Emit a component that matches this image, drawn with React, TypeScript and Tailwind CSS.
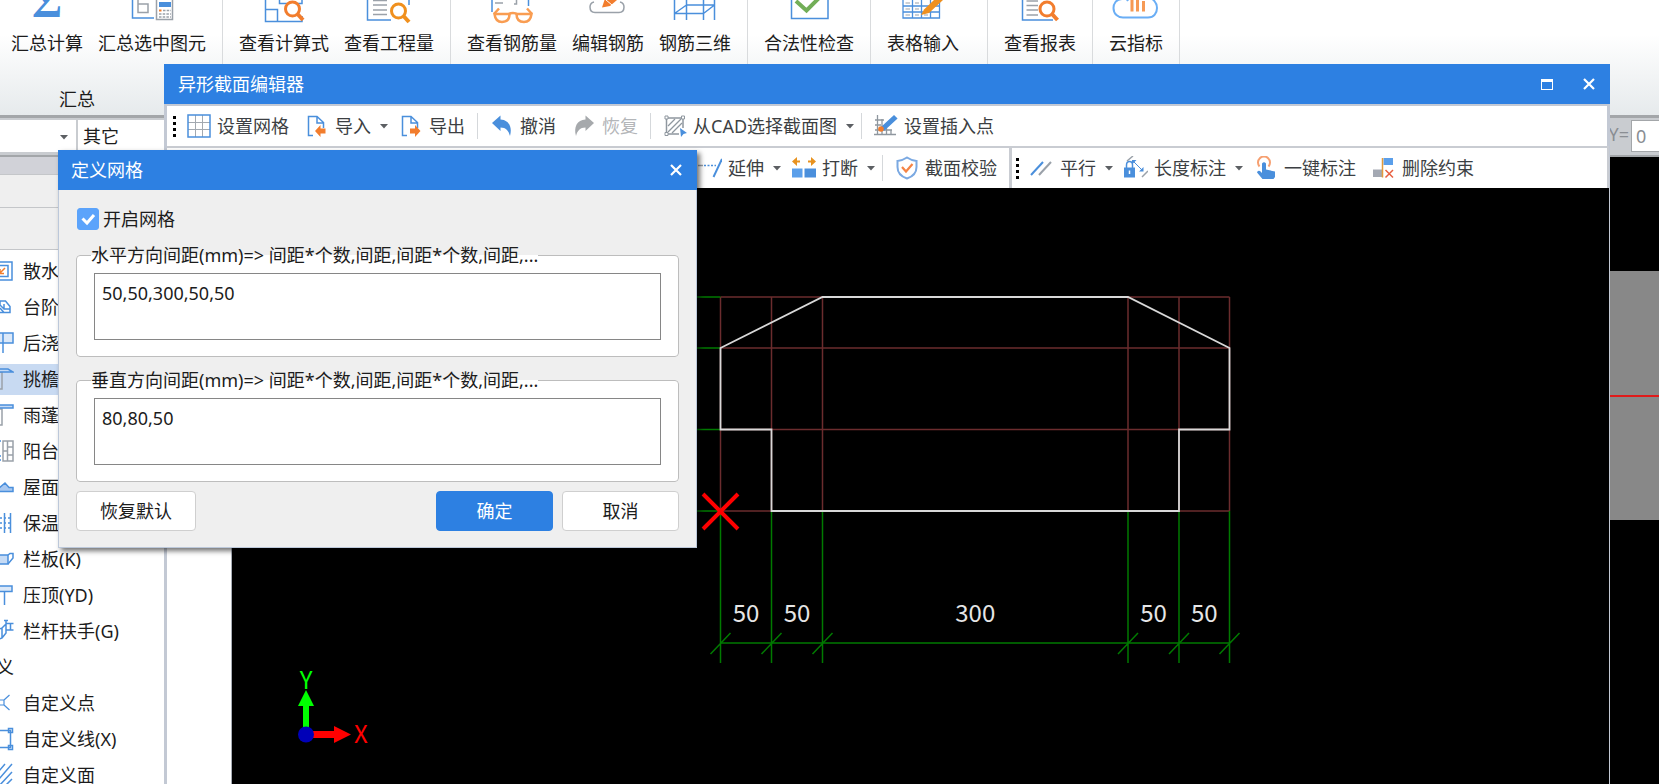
import type { ReactNode } from 'react';

const BLUE = '#4a8fdc';
const ORANGE = '#f27d2d';
const GREY = '#9aa1a9';

function RibbonIcon({ children }: { children: ReactNode }) {
  return (
    <svg className="h-6 w-12 shrink-0" viewBox="0 0 48 24" fill="none" aria-hidden="true">
      {children}
    </svg>
  );
}

const magnifier = (cx: number, cy: number, color: string) => (
  <>
    <circle cx={cx} cy={cy} r="7" stroke={color} strokeWidth="3" fill="#fff" />
    <path d={`M${cx + 5} ${cy + 5}l5.5 6`} stroke={color} strokeWidth="4" />
  </>
);

const ribbonIcons: Record<string, ReactNode> = {
  sum: (
    <text x="24" y="17" textAnchor="middle" fontSize="46" fontWeight="700" fill={BLUE} className="font-['Liberation_Serif',serif]">Σ</text>
  ),
  selected: (
    <>
      <path d="M4.500 0V18H26" stroke={BLUE} strokeWidth="1.500" />
      <path d="M10 0V4H20V12.500H10V4" stroke={GREY} strokeWidth="1.500" />
      <path d="M28.500 -2H44.500V19.500H28.500Z" stroke={GREY} strokeWidth="1.500" fill="#fff" />
      <rect x="31" y="2" width="12" height="5" fill={BLUE} />
      <path d="M31 10.500H33.500" stroke={ORANGE} strokeWidth="2" />
      <path d="M35 10.500H43M31 14H43M31 17H43" stroke={GREY} strokeWidth="1.500" strokeDasharray="2.500 1.200" />
    </>
  ),
  formula: (
    <>
      <path d="M5.500 0V21.500H42V16M5.500 9.500H17.500V21.500M19.500 0V3.500H42V0" stroke={BLUE} strokeWidth="1.500" />
      {magnifier(32.5, 9, ORANGE)}
    </>
  ),
  quantity: (
    <>
      <path d="M2.500 0V20H26M44 0V5" stroke={BLUE} strokeWidth="1.500" />
      <path d="M8 0.500H22M8 5H22M8 10H22M8 14.500H22" stroke={GREY} strokeWidth="1.500" />
      {magnifier(33.5, 11, '#f0901e')}
    </>
  ),
  rebar: (
    <>
      <path d="M4 0V12M40.500 0V6" stroke={BLUE} strokeWidth="1.500" />
      <path d="M7 3H15M28.500 0V4H26" stroke={GREY} strokeWidth="1.500" />
      <path d="M11 8.500L6 14M39 8.500L44 14M20 14.500Q25 11.500 30 14.500" stroke="#f99d52" strokeWidth="2.500" />
      <path d="M6.500 14H21.500Q21.500 22 14 22Q7.500 22 6.500 14ZM28.500 14H43.500Q42.500 22 36 22Q28.500 22 28.500 14Z" stroke="#f99d52" strokeWidth="2.500" />
    </>
  ),
  editRebar: (
    <>
      <path d="M10 2Q6 3 6 7Q6 12.500 11 12.500H35Q40 12.500 40 7Q40 3 36 2" stroke={GREY} strokeWidth="1.500" />
      <path d="M18 7.500L20.500 0H33L26 6Z" fill={ORANGE} />
      <path d="M22 0L28 5" stroke="#fff" />
    </>
  ),
  rebar3d: (
    <path d="M3.500 0V20M15.500 0V20M32.500 0V20M43.500 0V20M3.500 13.500H32.500M15.500 5H43.500M3.500 13.500L15.500 5M32.500 13.500L43.500 5" stroke={BLUE} strokeWidth="1.500" />
  ),
  validity: (
    <>
      <path d="M6.500 -2V18.500H43V-2" stroke={BLUE} strokeWidth="1.500" />
      <path d="M11 1L21.500 10.500L35 -3" stroke="#72ae57" strokeWidth="4" />
    </>
  ),
  table: (
    <>
      <path d="M4 0V18H40.500V0M4 6H40.500M4 12H40.500M13.500 0V18M22.500 0V18M31.500 0V18" stroke={BLUE} strokeWidth="1.300" />
      <path d="M6.500 3H11M6.500 9H11M6.500 15H11M16 3H20M16 9H20M16 15H20M25 15H29" stroke={GREY} />
      <path d="M22 15L25 9.500L35 0H44L30 13Z" fill="#ee9020" />
    </>
  ),
  report: (
    <>
      <path d="M6.500 0V20H37" stroke={BLUE} strokeWidth="1.500" />
      <path d="M10.500 1H22M10.500 5.500H22M10.500 10H22M10.500 15H22" stroke={GREY} strokeWidth="1.500" />
      {magnifier(31, 9, ORANGE)}
    </>
  ),
  cloud: (
    <>
      <path d="M16 1Q14 -3 10 -1.500M10 -1C4 -1 1.500 4 1.500 8C1.500 14 6 17.500 11 17.500H36C42 17.500 45 13 45 8C45 3 42 0 39 -2" stroke="#6aaef5" strokeWidth="2" />
      <path d="M20 0V11.500M25.500 0V11.500M31.500 1V11.500" stroke="#f69a55" strokeWidth="3" />
    </>
  ),
};

/* ---------- toolbar icons ---------- */

function ToolIcon({ children }: { children: ReactNode }) {
  return (
    <svg className="size-6 shrink-0" viewBox="0 0 24 24" fill="none" aria-hidden="true">
      {children}
    </svg>
  );
}

const page = <path d="M8 21.500H3.500V2.500H12L18.500 8.500V14M12 2.500V9H18.500" stroke={BLUE} strokeWidth="1.500" />;

const toolIcons: Record<string, ReactNode> = {
  grid: (
    <>
      <path d="M8.500 1V23M15.500 1V23M1 8.500H23M1 15.500H23" stroke="#a3a9b0" />
      <rect x="1" y="1" width="22" height="22" stroke={BLUE} strokeWidth="1.500" />
    </>
  ),
  importFile: (
    <>
      {page}
      <path d="M10 17L15.500 11V14.500H20.500V19.500H15.500V23Z" fill={ORANGE} />
    </>
  ),
  exportFile: (
    <>
      {page}
      <path d="M21.500 17L16 11V14.500H11V19.500H16V23Z" fill={ORANGE} />
    </>
  ),
  undo: <path d="M2 9L10.500 1.500V5.500C19 6 22.500 13 20 22C18.500 16.500 16 13.500 10.500 13.500V17Z" fill={BLUE} />,
  redo: <path d="M22 9L13.500 1.500V5.500C5 6 1.500 13 4 22C5.500 16.500 8 13.500 13.500 13.500V17Z" fill="#a6a9ac" />,
  cad: (
    <>
      <path d="M3.500 4V20H16M3.500 4H20V14" stroke="#8f979f" strokeWidth="1.500" />
      <path d="M5 12L12 5M5 18L18 5M9 19L19 9" stroke="#8f979f" strokeWidth="1.300" />
      <path d="M2 2H5V5H2ZM18.500 2H21.500V5H18.500ZM2 18.500H5V21.500H2Z" stroke="#8f979f" fill="#fff" />
      <path d="M17 14L24 19L20.500 20L18 23Z" fill={BLUE} />
    </>
  ),
  insertPoint: (
    <>
      <path d="M3.500 1V21M8 5V21M12.500 14V21M17 16V21M1 6H10M1 11H7M1 16H18M0 20.500H22" stroke="#8f979f" strokeWidth="1.300" />
      <path d="M20 2L22.500 4.500L10 16L7.500 13.500Z" fill={BLUE} stroke={BLUE} strokeWidth="1.500" />
      <circle cx="7" cy="15" r="2.800" fill={ORANGE} />
    </>
  ),
  extend: (
    <>
      <path d="M0 9.500H5" stroke={GREY} strokeWidth="1.500" />
      <path d="M6 9.500H18" stroke={BLUE} strokeWidth="1.500" strokeDasharray="2 1.500" />
      <path d="M24 3L15.500 21" stroke={BLUE} strokeWidth="2" />
    </>
  ),
  split: (
    <>
      <path d="M0 12.500H10.500V21.500H0Z" fill="#5b9fea" />
      <path d="M12.500 12.500H24V21.500H12.500Z" fill={BLUE} />
      <path d="M8 5.500H3M16 5.500H21" stroke="#e8921f" strokeWidth="2" />
      <path d="M5 1V10L0 5.500ZM19 1V10L24 5.500Z" fill="#e8921f" />
    </>
  ),
  shield: (
    <>
      <path d="M12 1.500Q16.500 4.500 21.500 5V11C21.500 17 18 20.500 12 22.500C6 20.500 2.500 17 2.500 11V5Q7.500 4.500 12 1.500Z" stroke="#7ba9e2" strokeWidth="2" />
      <path d="M7 11L11 15.500L17.500 8" stroke="#f58445" strokeWidth="2.200" />
    </>
  ),
  parallel: (
    <>
      <path d="M1 19L13 6" stroke={BLUE} strokeWidth="2" />
      <path d="M9 19L21 6" stroke={GREY} strokeWidth="2" />
    </>
  ),
  lengthMark: (
    <>
      <path d="M0 11.500H11V21.500H0Z" fill={BLUE} />
      <path d="M2.500 12V9Q2.500 5.500 5.500 5.500Q8.500 5.500 8.500 9V12" stroke={BLUE} strokeWidth="1.500" />
      <path d="M5.500 14.500V18" stroke="#fff" strokeWidth="1.500" />
      <path d="M9 5L18 14" stroke={BLUE} />
      <path d="M8 4H12.500L8 8.500ZM19.500 15.500H15L19.500 11Z" fill={BLUE} />
      <path d="M3 5L9 0M18 21L24 15" stroke={GREY} strokeWidth="1.500" />
    </>
  ),
  oneKey: (
    <>
      <path d="M5.500 10.500A6 6 0 1 1 14.500 10.500" stroke="#f6a071" strokeWidth="2" />
      <path d="M8 7.500Q10 5 12 7.500V13.500L21 15.500V21L19.500 23H8.500L3 16.500Q3.500 14 6 15L8 17Z" fill={BLUE} />
    </>
  ),
  removeConstraint: (
    <>
      <path d="M1 13.500H10V21H1Z" fill="#a4a9b3" />
      <path d="M11.500 2H21V9H11.500Z" fill="#5b9fea" />
      <path d="M10.500 2V21.500" stroke="#e39b3b" strokeWidth="1.500" />
      <path d="M13.500 14L21 21.500M21 14L13.500 21.500" stroke="#e85f3f" strokeWidth="1.500" />
    </>
  ),
};

/* ---------- component list icons, right half visible ---------- */

function ListIcon({ children }: { children: ReactNode }) {
  return (
    <svg className="h-6 w-3.5 shrink-0" viewBox="0 0 14 24" fill="none" stroke={BLUE} strokeWidth="1.500" aria-hidden="true">
      {children}
    </svg>
  );
}

const components: { name: string; active?: boolean; icon: ReactNode }[] = [
  {
    name: '散水',
    icon: (
      <>
        <path d="M-2 3H12V21H-2M-2 6.500H8V17.500H-2" />
        <path d="M5 9L0 14M0 10V14.500H4" stroke={ORANGE} />
      </>
    ),
  },
  { name: '台阶', icon: <path d="M-2 17.500H10V11.500L5.500 6H0V10M0 10L4 14H10M4 14V9M0 13L4 17.500" /> },
  { name: '后浇', icon: <><path d="M-2 2H13V12H-2" fill="#dbe8f8" /><path d="M3 2V22" /></> },
  { name: '挑檐', active: true, icon: <><path d="M-1 5H2V22H-1" stroke={GREY} /><path d="M-1 2H8L13 5H-1Z" fill="#c6dbf5" /></> },
  { name: '雨蓬', icon: <><path d="M-1 6H2V22H-1" stroke={GREY} /><path d="M-1 2H13V5H-1Z" fill="#c6dbf5" /></> },
  {
    name: '阳台',
    icon: (
      <>
        <path d="M3 2H13V22H3ZM7.500 2V22M7.500 8H13M3 12H7.500M7.500 16H13" stroke={GREY} />
        <path d="M-1 2H1M-1 17H1M-1 21H1" />
      </>
    ),
  },
  { name: '屋面', icon: <path d="M-1 13L5 8L9 12.500H13V16.500H-1Z" fill="#a9c8f0" /> },
  { name: '保温', icon: <><path d="M4.500 2V22M10.500 2V22" /><path d="M0 7H10M0 12H10M0 17H10" strokeDasharray="2 2" /></> },
  { name: '栏板(K)', icon: <><path d="M-1 8H8V17H-1Z" fill="#c6dbf5" /><path d="M8 8L10 6.500H13V11L8 17" /></> },
  { name: '压顶(YD)', icon: <><path d="M-1 3H12V8.500H-1Z" fill="#dbe8f8" /><path d="M4.500 8.500V22" /></> },
  { name: '栏杆扶手(G)', icon: <path d="M-1 10L2 9V19L-1 20M2 9L6 5V14L2 19M4 1.500H8M6 1.500V14M6 4.500H13.500M6 11H13.500M10.500 4.500V11" /> },
];

const customComponents: { name: string; icon: ReactNode }[] = [
  { name: '自定义点', icon: <path d="M-1 9H4V14H-1ZM4 9L9.500 4M4 14L9.500 19" strokeWidth="1.200" /> },
  { name: '自定义线(X)', icon: <path d="M-1 3.500H10.500V20.500H-1M8.500 1.500H12.500V5.500H8.500ZM8.500 18.500H12.500V22.500H8.500Z" /> },
  { name: '自定义面', icon: <path d="M-1 8L5 1M-1 16L12 1M-1 23L12 9M5 23L12 16" /> },
];

/* ---------- small shared parts ---------- */

function RibbonGroup({ items, className = 'px-4' }: { items: [string, string][]; className?: string }) {
  return (
    <div className={`flex h-[100px] gap-[15px] border-r border-[#d9dbdd] ${className}`}>
      {items.map(([icon, label]) => (
        <button key={label} type="button" className="flex flex-col items-center">
          <RibbonIcon>{ribbonIcons[icon]}</RibbonIcon>
          <span className="mt-[5px] leading-7 whitespace-nowrap">{label}</span>
        </button>
      ))}
    </div>
  );
}

function Caret() {
  return (
    <svg className="h-3 w-3.5 shrink-0" viewBox="0 0 14 12" fill="#5c5f63" aria-hidden="true">
      <path d="M3 4H11L7 8.500Z" />
    </svg>
  );
}

type ToolProps = { icon: string; label: string; caret?: boolean; disabled?: boolean };

function Tool({ icon, label, caret, disabled }: ToolProps) {
  return (
    <button
      type="button"
      disabled={disabled}
      className={`flex h-8 items-center gap-1.5 pl-2 whitespace-nowrap ${caret ? 'pr-0' : 'pr-2'} ${disabled ? 'text-[#b4b6b9]' : 'text-[#3c3f43]'}`}
    >
      <ToolIcon>{toolIcons[icon]}</ToolIcon>
      <span>{label}</span>
      {caret && <Caret />}
    </button>
  );
}

function Separator() {
  return <div className="mx-1 h-[26px] w-px bg-[#d5d8db]" />;
}

function Grip() {
  return (
    <div className="flex flex-col gap-[3px] pr-[3px] pl-1" aria-hidden="true">
      {[0, 1, 2, 3].map((i) => (
        <span key={i} className="size-[3px] bg-black" />
      ))}
    </div>
  );
}

function CloseIcon() {
  return (
    <svg className="size-3" viewBox="0 0 12 12" stroke="#fff" strokeWidth="2.200" aria-hidden="true">
      <path d="M1 1L11 11M11 1L1 11" />
    </svg>
  );
}

/* ---------- section drawing ---------- */

const columns = [488.5, 539.5, 590.5, 896, 947, 997.5];
const rows = [109, 160, 241.5, 323];
const spans = [50, 50, 300, 50, 50];

function SectionCanvas() {
  const [left, right] = [columns[0], columns[5]];
  const [top, bottom] = [rows[0], rows[3]];

  return (
    <svg className="min-w-0 flex-1 bg-black" role="img" aria-label="异形截面" fill="none">
      {/* grid */}
      <g stroke="#6b2c2e" strokeWidth="1.500">
        {columns.map((x) => <path key={x} d={`M${x} ${top}V${bottom}`} />)}
        {rows.map((y) => <path key={y} d={`M${left} ${y}H${right}`} />)}
      </g>

      {/* dimension lines */}
      <g stroke="#007a00" strokeWidth="1.500">
        {rows.map((y) => <path key={y} d={`M350 ${y}H${left}`} />)}
        {columns.map((x) => <path key={x} d={`M${x} ${bottom}V475M${x - 10} 466L${x + 10} 445`} />)}
        <path d={`M${left} 455H${right}`} />
      </g>
      <g fill="#e6e6e6" fontSize="24" textAnchor="middle" className="font-['Noto_Sans_CJK_SC',sans-serif]">
        {spans.map((value, i) => (
          <text key={i} x={(columns[i] + columns[i + 1]) / 2} y="434">{value}</text>
        ))}
      </g>

      {/* outline */}
      <path d="M488.500 160L590.500 109H896L997.500 160V241.500H947V323H539.500V241.500H488.500Z" stroke="#d8d8d8" strokeWidth="1.800" />

      {/* insertion point */}
      <path d="M471 306L506 341M506 306L471 341" stroke="#f00" strokeWidth="4" />

      {/* axes */}
      <path d="M71 542V518H66L74 502L82 518H77V542Z" fill="#0f0" />
      <path d="M80 543H102V538L119 546.500L102 555V550H80Z" fill="#f00" />
      <circle cx="74" cy="546.500" r="8" fill="#0000b8" />
      <g fontSize="24" textAnchor="middle" className="font-['Noto_Sans_CJK_SC',sans-serif]">
        <text x="74" y="501" fill="#0f0">Y</text>
        <text x="129" y="555" fill="#f00">X</text>
      </g>
    </svg>
  );
}

/* ---------- windows ---------- */

function SectionEditor() {
  return (
    <section className="absolute top-16 right-[49px] bottom-0 left-[164px] flex flex-col">
      <header className="flex h-10 shrink-0 items-center bg-[#2d80e2] pr-[15px] pl-3.5 text-white">
        <h1>异形截面编辑器</h1>
        <button type="button" aria-label="最大化" className="mr-[30px] ml-auto h-[11px] w-3 border-x border-t-3 border-b border-white" />
        <button type="button" aria-label="关闭"><CloseIcon /></button>
      </header>

      <div className="flex min-h-0 flex-1 flex-col border-t-2 border-r border-l-3 border-[#c3c9d4] bg-white">
        <div className="flex h-10 shrink-0 items-center border-r-2 border-[#c3c9d4] pl-0.5">
          <Grip />
          <Tool icon="grid" label="设置网格" />
          <Tool icon="importFile" label="导入" caret />
          <Tool icon="exportFile" label="导出" />
          <Separator />
          <Tool icon="undo" label="撤消" />
          <Tool icon="redo" label="恢复" disabled />
          <Separator />
          <Tool icon="cad" label="从CAD选择截面图" caret />
          <Separator />
          <Tool icon="insertPoint" label="设置插入点" />
        </div>

        <div className="flex h-[42px] shrink-0 items-center border-t-2 border-r-2 border-[#c9ccd2] pl-[523px]">
          <Tool icon="extend" label="延伸" caret />
          <Tool icon="split" label="打断" caret />
          <Separator />
          <Tool icon="shield" label="截面校验" />
          <div className="ml-1 flex h-full items-center border-l-3 border-[#c9ccd2]">
            <Grip />
            <Tool icon="parallel" label="平行" caret />
            <Tool icon="lengthMark" label="长度标注" caret />
            <Tool icon="oneKey" label="一键标注" />
            <Tool icon="removeConstraint" label="删除约束" />
          </div>
        </div>

        <div className="flex min-h-0 flex-1">
          <div className="w-[65px] shrink-0 border-r border-[#a8adb5]" />
          <SectionCanvas />
        </div>
      </div>
    </section>
  );
}

function SpacingField({ id, label, value }: { id: string; label: string; value: string }) {
  return (
    <fieldset className="mb-[9px] rounded border border-[#bdbdbd] bg-white px-[17px] pt-1 pb-4">
      <legend className="-ml-[3px] leading-7">
        <label htmlFor={id}>{label}</label>
      </legend>
      <textarea
        id={id}
        defaultValue={value}
        className="block h-[67px] w-full resize-none border border-[#868686] bg-white px-[7px] pt-[5px] leading-7 outline-none"
      />
    </fieldset>
  );
}

function GridDialog() {
  const button = 'h-10 rounded border text-center';
  return (
    <section role="dialog" aria-label="定义网格" className="absolute top-[150px] left-[58px] w-[639px] bg-[#efefef] shadow-[3px_3px_5px_rgba(0,0,0,0.55)]">
      <header className="flex h-10 items-center justify-between bg-[#2d80e2] pr-[15px] pl-[13px] text-white">
        <h2>定义网格</h2>
        <button type="button" aria-label="关闭"><CloseIcon /></button>
      </header>
      <form className="border border-t-0 border-[#bcc8da] px-[17px] pt-[15px] pb-4">
        <div className="mb-2 flex h-7 items-center gap-1 pl-px">
          <span className="relative size-[22px]">
            <input id="grid-on" type="checkbox" defaultChecked className="peer block size-[22px] appearance-none rounded-[3px] border border-[#5ba3fb] checked:bg-[#5ba3fb]" />
            <svg className="pointer-events-none absolute inset-0 hidden peer-checked:block" viewBox="0 0 22 22" fill="none" stroke="#fff" strokeWidth="3" aria-hidden="true">
              <path d="M5.500 10.500L10 15L17 7" />
            </svg>
          </span>
          <label htmlFor="grid-on">开启网格</label>
        </div>
        <SpacingField id="spacing-x" label="水平方向间距(mm)=> 间距*个数,间距,间距*个数,间距,..." value="50,50,300,50,50" />
        <SpacingField id="spacing-y" label="垂直方向间距(mm)=> 间距*个数,间距,间距*个数,间距,..." value="80,80,50" />
        <div className="flex gap-[9px]">
          <button type="reset" className={`${button} w-[120px] border-[#cfcfcf] bg-white`}>恢复默认</button>
          <button type="button" className={`${button} ml-auto w-[117px] border-[#2d80e2] bg-[#2d80e2] text-white`}>确定</button>
          <button type="button" className={`${button} w-[117px] border-[#cfcfcf] bg-white`}>取消</button>
        </div>
      </form>
    </section>
  );
}

/* ---------- main program behind the windows ---------- */

function ComponentList() {
  return (
    <aside className="flex w-[164px] shrink-0 flex-col overflow-hidden bg-white">
      <div className="h-[18px] shrink-0 border-b border-[#c4c6c9] bg-[#d1d2d8]" />
      <div className="h-[33px] shrink-0 border-b border-[#c4c6c9] bg-[#efefef]" />
      <div className="h-[42px] shrink-0 border-b border-[#c4c6c9] bg-[#efefef]" />
      <ul className="pt-[3px]">
        {components.map((c) => (
          <li key={c.name} className="flex h-9 items-center">
            <span className={`flex h-[31px] w-full items-center gap-[9px] ${c.active ? 'bg-[#c8daf2]' : ''}`}>
              <ListIcon>{c.icon}</ListIcon>
              <span>{c.name}</span>
            </span>
          </li>
        ))}
        <li className="-ml-10 flex h-9 items-center">自定义</li>
        {customComponents.map((c) => (
          <li key={c.name} className="flex h-9 items-center gap-[9px]">
            <ListIcon>{c.icon}</ListIcon>
            <span>{c.name}</span>
          </li>
        ))}
      </ul>
    </aside>
  );
}

export default function App() {
  return (
    <div className="relative flex h-screen flex-col overflow-hidden bg-black font-['Noto_Sans','Noto_Sans_CJK_SC',sans-serif] text-[18px] leading-7 text-[#1c1c1c]">
      <header className="flex h-[118px] shrink-0 border-b-3 border-[#a3a6a9] bg-linear-to-b from-white from-30% to-[#e6eaec]">
        <div>
          <RibbonGroup className="pr-4 pl-[11px]" items={[['sum', '汇总计算'], ['selected', '汇总选中图元']]} />
          <div className="-mt-[15px] pl-[59px]">汇总</div>
        </div>
        <RibbonGroup items={[['formula', '查看计算式'], ['quantity', '查看工程量']]} />
        <RibbonGroup items={[['rebar', '查看钢筋量'], ['editRebar', '编辑钢筋'], ['rebar3d', '钢筋三维']]} />
        <RibbonGroup items={[['validity', '合法性检查']]} />
        <RibbonGroup className="pr-7 pl-4" items={[['table', '表格输入']]} />
        <RibbonGroup items={[['report', '查看报表']]} />
        <RibbonGroup items={[['cloud', '云指标']]} />
      </header>

      <div className="flex h-[39px] shrink-0 items-start gap-0.5 border-b-2 border-[#a3a6a9] bg-[#c9ccd0] pt-0.5">
        <div className="relative">
          <select aria-label="楼层" className="block h-8 w-[76px] appearance-none bg-white pl-1">
            <option></option>
          </select>
          <span className="pointer-events-none absolute top-[11px] right-[5px]"><Caret /></span>
        </div>
        <select aria-label="构件" defaultValue="其它" className="block h-8 w-[150px] appearance-none bg-white pl-[5px]">
          <option>其它</option>
        </select>
        <label htmlFor="coord-y" className="ml-auto text-[#8a8e93]">Y=</label>
        <input id="coord-y" defaultValue="0" className="h-8 w-7 border border-r-0 border-[#a3a6a9] bg-white pl-1 text-[#8a8e93]" />
      </div>

      <main className="flex min-h-0 flex-1">
        <ComponentList />
        <div className="flex-1 pt-[114px]">
          <div className="flex h-[249px] items-center bg-[#888]">
            <div className="h-0.5 w-full bg-[#e01b1b]" />
          </div>
        </div>
      </main>

      <SectionEditor />
      <GridDialog />
    </div>
  );
}
